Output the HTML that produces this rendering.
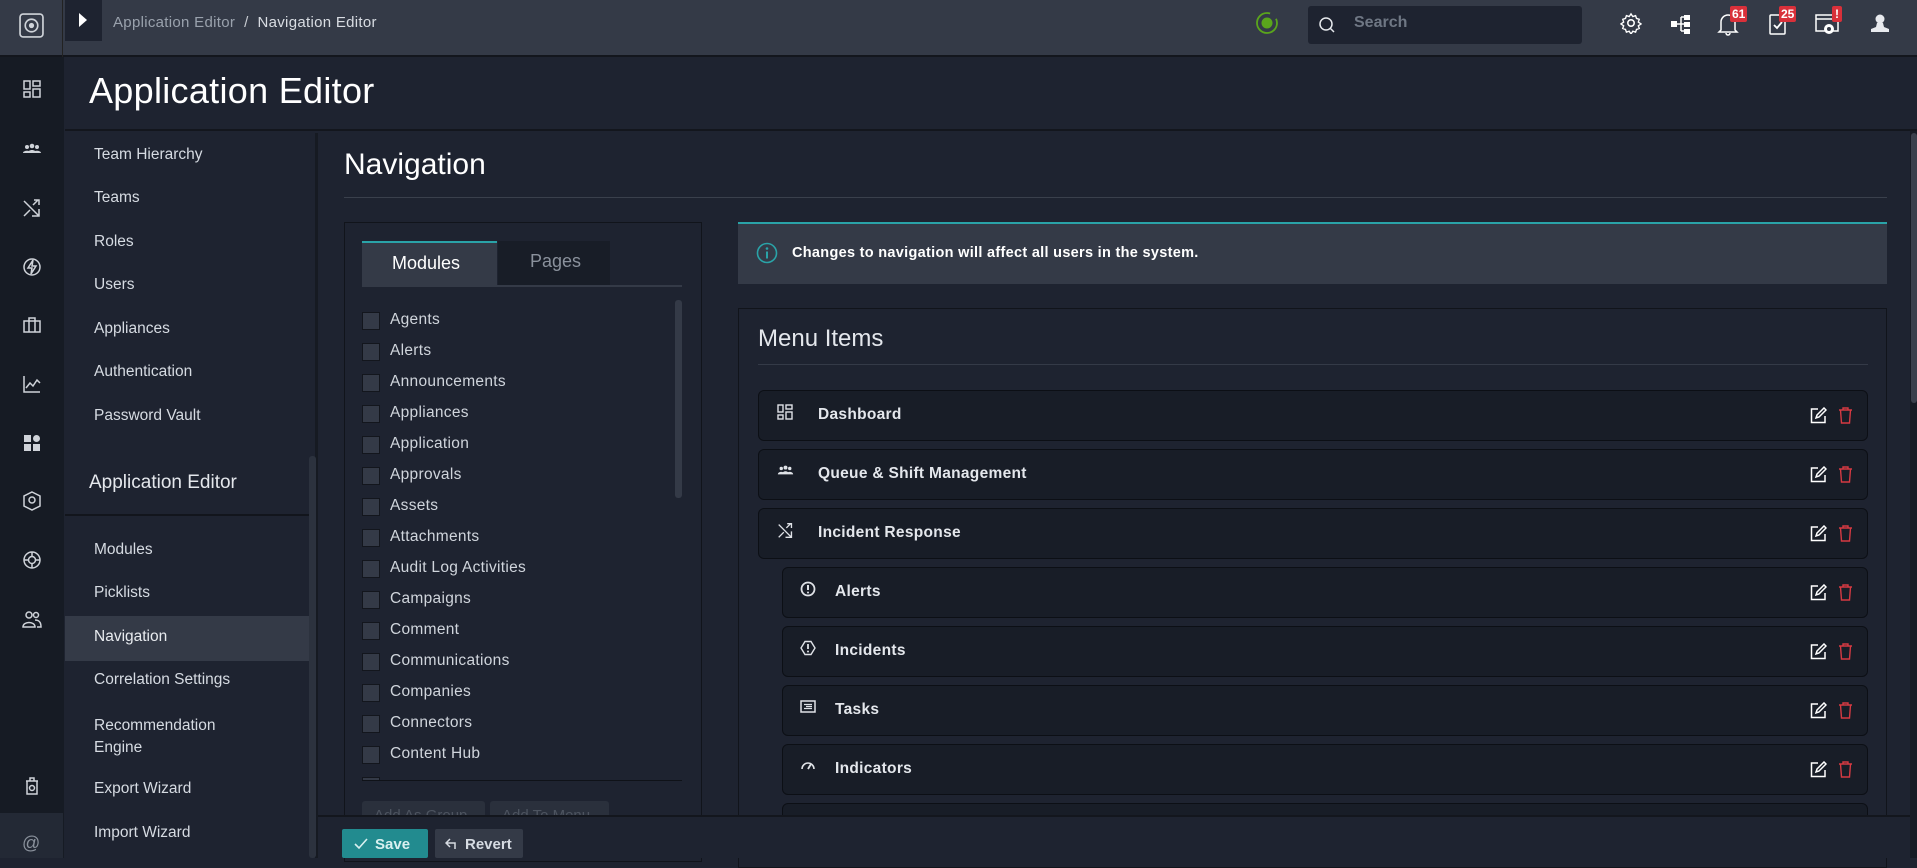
<!DOCTYPE html>
<html><head><meta charset="utf-8"><style>
*{box-sizing:border-box;margin:0;padding:0}
body{width:1917px;height:858px;overflow:hidden;background:#1e2330;font-family:"Liberation Sans",sans-serif;color:#dde1e7;position:relative}
.a{position:absolute}
.top{left:0;top:0;width:1917px;height:57px;background:#343a47;border-bottom:2px solid #13161d}
.rail{left:0;top:57px;width:64px;height:801px;background:#161b24}
.ri{position:absolute;left:22px;width:20px;height:20px}
.nav{font-size:15.5px;color:#d6dbe2;left:94px}
.ck{position:absolute;left:362px;width:18px;height:18px;background:#343a47;border:1px solid #13161d}
.cl{position:absolute;left:390px;font-size:15.5px;color:#d0d5dc;letter-spacing:.3px}
.row{position:absolute;height:51px;background:#181d27;border:1px solid #0c0f15;border-radius:6px;right:49px}
.row span{position:absolute;top:15px;font-size:15.5px;font-weight:bold;color:#e4e7ec;letter-spacing:.3px}
.row svg{position:absolute;top:15px}
.row svg.ed{left:auto;right:40px;top:16px}
.row svg.tr{left:auto;right:14px;top:16px}
</style></head><body>
<div class="a top"></div>
<div class="a" style="left:0;top:0;width:63px;height:57px;border-right:1px solid #222"></div>
<svg class="a" style="left:19px;top:13px" width="25" height="25" viewBox="0 0 24 24"><rect x="1" y="1" width="22" height="22" rx="3" fill="none" stroke="#cfd3d9" stroke-width="1.6"/><circle cx="12" cy="12" r="6" fill="none" stroke="#cfd3d9" stroke-width="1.6"/><circle cx="12" cy="12" r="2.5" fill="#cfd3d9"/></svg>
<div class="a" style="left:65px;top:0;width:37px;height:41px;background:#1e2330"></div>
<svg class="a" style="left:78px;top:12px" width="10" height="16"><path d="M1 1 L9 8 L1 15Z" fill="#fff"/></svg>
<div class="a" style="left:113px;top:14px;font-size:15px;color:#9aa2ad;letter-spacing:.3px">Application Editor <span style="color:#c8ccd2">&nbsp;/&nbsp;&nbsp;</span><span style="color:#d9dde3">Navigation Editor</span></div>
<svg class="a" style="left:1255px;top:11px" width="24" height="24" viewBox="0 0 24 24"><circle cx="12" cy="12" r="10" fill="none" stroke="#5aa51c" stroke-width="1.8" stroke-dasharray="50 8"/><circle cx="12" cy="12" r="5.5" fill="#5aa51c"/></svg>
<div class="a" style="left:1308px;top:6px;width:274px;height:38px;background:#1e2330;border-radius:3px"></div>
<svg class="a" style="left:1318px;top:16px" width="18" height="18" viewBox="0 0 18 18"><circle cx="8" cy="8" r="6" fill="none" stroke="#e5e8ec" stroke-width="1.5"/><path d="M12 12l4 4" stroke="#e5e8ec" stroke-width="1.5"/></svg>
<div class="a" style="left:1354px;top:14px;font-size:16px;color:#6f7784;font-weight:bold">Search</div>
<svg class="a" style="left:1620px;top:12px" width="22" height="22" viewBox="0 0 24 24"><circle cx="12" cy="12" r="3.5" fill="none" stroke="#fff" stroke-width="1.7"/><path d="M12 2l2 3 3-1 1 3 3 1-1 3 3 2-3 2 1 3-3 1-1 3-3-1-2 3-2-3-3 1-1-3-3-1 1-3-3-2 3-2-1-3 3-1 1-3 3 1z" fill="none" stroke="#fff" stroke-width="1.5"/></svg>
<svg class="a" style="left:1670px;top:13px" width="22" height="22" viewBox="0 0 22 22"><rect x="1" y="8" width="6" height="6" fill="#fff"/><rect x="14" y="2" width="6" height="5" fill="#fff"/><rect x="14" y="9" width="6" height="5" fill="#fff"/><rect x="14" y="16" width="6" height="5" fill="#fff"/><path d="M7 11h4M11 4v14M11 4h3M11 11h3M11 18h3" stroke="#fff" stroke-width="1.5"/></svg>
<svg class="a" style="left:1717px;top:12px" width="22" height="24" viewBox="0 0 22 24"><path d="M4 18V10a7 7 0 0114 0v8l2 2H2z M9 21a2 2 0 004 0" fill="none" stroke="#fff" stroke-width="1.5"/></svg>
<div class="a" style="left:1730px;top:6px;background:#d9303a;color:#fff;font-size:12px;font-weight:bold;padding:1px 2px;border-radius:2px">61</div>
<svg class="a" style="left:1768px;top:12px" width="20" height="24" viewBox="0 0 20 24"><rect x="2" y="3" width="15" height="19" rx="1" fill="none" stroke="#fff" stroke-width="1.5"/><path d="M6 13l3 3 5-6" fill="none" stroke="#fff" stroke-width="1.8"/></svg>
<div class="a" style="left:1779px;top:6px;background:#d9303a;color:#fff;font-size:12px;font-weight:bold;padding:1px 2px;border-radius:2px">25</div>
<svg class="a" style="left:1815px;top:12px" width="26" height="24" viewBox="0 0 26 24"><rect x="1" y="3" width="22" height="16" fill="none" stroke="#fff" stroke-width="1.5"/><path d="M1 7h22" stroke="#fff" stroke-width="1.5"/><circle cx="14" cy="17" r="5" fill="#fff"/><circle cx="14" cy="17" r="2" fill="#343a47"/></svg>
<div class="a" style="left:1832px;top:6px;background:#d9303a;color:#fff;font-size:12px;font-weight:bold;padding:1px 3px;border-radius:2px">!</div>
<svg class="a" style="left:1870px;top:13px" width="20" height="20" viewBox="0 0 20 20"><circle cx="10" cy="6" r="4.5" fill="#e8eaee"/><path d="M7 10h6l1 4 5 2v3H1v-3l5-2z" fill="#e8eaee"/></svg>

<div class="a rail"></div>
<svg class="ri" style="top:79px" viewBox="0 0 20 20" fill="none" stroke="#cfd3d9" stroke-width="1.5"><rect x="2" y="2" width="6" height="8"/><rect x="11" y="2" width="7" height="5"/><rect x="2" y="13" width="6" height="5"/><rect x="11" y="10" width="7" height="8"/></svg>
<svg class="ri" style="top:139px" viewBox="0 0 20 20" fill="#cfd3d9"><circle cx="5" cy="8" r="2"/><circle cx="10" cy="7" r="2.3"/><circle cx="15" cy="8" r="2"/><path d="M1 14c0-3 8-3 8 0zM6 14c0-4 8-4 8 0zM11 14c0-3 8-3 8 0z"/></svg>
<svg class="ri" style="top:198px" viewBox="0 0 20 20" fill="none" stroke="#cfd3d9" stroke-width="1.5"><path d="M2 3l15 15M17 11v7h-7M2 18L8 12M11 7l5-5M12 2h5v5"/></svg>
<svg class="ri" style="top:257px" viewBox="0 0 20 20" fill="none" stroke="#cfd3d9" stroke-width="1.5"><circle cx="10" cy="10" r="8"/><path d="M11 3L6 11h4l-1 6 5-8h-4z"/></svg>
<svg class="ri" style="top:315px" viewBox="0 0 20 20" fill="none" stroke="#cfd3d9" stroke-width="1.5"><rect x="2" y="6" width="16" height="11"/><path d="M7 6V3h6v3M7 6v11M13 6v11"/></svg>
<svg class="ri" style="top:374px" viewBox="0 0 20 20" fill="none" stroke="#cfd3d9" stroke-width="1.5"><path d="M2 2v16h16M4 14l4-5 3 3 4-6 3 3"/></svg>
<svg class="ri" style="top:433px" viewBox="0 0 20 20" fill="#cfd3d9"><rect x="2" y="2" width="7" height="7"/><circle cx="14.5" cy="5.5" r="3.5"/><rect x="2" y="11" width="7" height="7"/><rect x="11" y="11" width="7" height="7"/></svg>
<svg class="ri" style="top:491px" viewBox="0 0 20 20" fill="none" stroke="#cfd3d9" stroke-width="1.5"><path d="M10 1l8 4v10l-8 4-8-4V5z"/><circle cx="10" cy="9" r="3"/></svg>
<svg class="ri" style="top:550px" viewBox="0 0 20 20" fill="none" stroke="#cfd3d9" stroke-width="1.5"><circle cx="10" cy="10" r="8"/><circle cx="10" cy="10" r="3.5"/><path d="M10 2v4M10 14v4M2 10h4M14 10h4"/></svg>
<svg class="ri" style="top:609px" viewBox="0 0 20 20" fill="none" stroke="#cfd3d9" stroke-width="1.5"><circle cx="7" cy="6" r="3"/><circle cx="14" cy="6" r="2.5"/><path d="M1 18c0-6 12-6 12 0zM13 11c4 0 6 2 6 7h-4"/></svg>
<svg class="ri" style="top:776px" viewBox="0 0 20 20" fill="none" stroke="#cfd3d9" stroke-width="1.5"><path d="M4 5h12M8 5V2h4v3M5 5v13h10V5"/><circle cx="10" cy="12" r="2.5"/></svg>
<div class="a" style="left:0;top:813px;width:63px;height:45px;background:#232935"></div>
<div class="a" style="left:22px;top:833px;font-size:18px;color:#8a919c">@</div>

<div class="a" style="left:65px;top:59px;width:1852px;height:72px;background:#1e2330;border-bottom:2px solid #13161d"></div>
<div class="a" style="left:89px;top:70px;font-size:36px;color:#fff;letter-spacing:.3px">Application Editor</div>

<div class="a" style="left:65px;top:133px;width:253px;height:725px;background:#1e2330;border-right:3px solid #161a22"></div>
<div class="a nav" style="top:146px">Team Hierarchy</div>
<div class="a nav" style="top:189px">Teams</div>
<div class="a nav" style="top:233px">Roles</div>
<div class="a nav" style="top:276px">Users</div>
<div class="a nav" style="top:320px">Appliances</div>
<div class="a nav" style="top:363px">Authentication</div>
<div class="a nav" style="top:407px">Password Vault</div>
<div class="a" style="left:89px;top:472px;font-size:19px;color:#e4e7ec">Application Editor</div>
<div class="a" style="left:65px;top:514px;width:244px;height:2px;background:#12151c"></div>
<div class="a nav" style="top:541px">Modules</div>
<div class="a nav" style="top:584px">Picklists</div>
<div class="a" style="left:65px;top:616px;width:244px;height:45px;background:#343a47"></div>
<div class="a nav" style="top:628px;color:#e8ebef">Navigation</div>
<div class="a nav" style="top:671px">Correlation Settings</div>
<div class="a nav" style="top:715px;line-height:22px">Recommendation<br>Engine</div>
<div class="a nav" style="top:780px">Export Wizard</div>
<div class="a nav" style="top:824px">Import Wizard</div>
<div class="a" style="left:309px;top:456px;width:7px;height:402px;background:#2c323e;border-radius:3px"></div>

<div class="a" style="left:344px;top:148px;font-size:30px;color:#fff">Navigation</div>
<div class="a" style="left:344px;top:197px;width:1543px;height:1px;background:#3a404c"></div>
<div class="a" style="left:1910px;top:131px;width:7px;height:727px;background:#161b24"></div>
<div class="a" style="left:1911px;top:133px;width:6px;height:270px;background:#3a404c;border-radius:3px"></div>

<div class="a" style="left:344px;top:222px;width:358px;height:640px;border:1px solid #11141b"></div>
<div class="a" style="left:362px;top:241px;width:320px;height:46px;border-bottom:2px solid #343a47"></div>
<div class="a" style="left:362px;top:241px;width:135px;height:46px;background:#343a47;border-top:2px solid #2aa3a8"></div>
<div class="a" style="left:392px;top:253px;font-size:18px;color:#fff">Modules</div>
<div class="a" style="left:498px;top:241px;width:112px;height:44px;background:#181d27"></div>
<div class="a" style="left:530px;top:251px;font-size:18px;color:#8a919c">Pages</div>
<div class="a" style="left:675px;top:300px;width:7px;height:198px;background:#343a47;border-radius:3px"></div>
<div class="ck" style="top:312px"></div><div class="cl" style="top:311px">Agents</div>
<div class="ck" style="top:343px"></div><div class="cl" style="top:342px">Alerts</div>
<div class="ck" style="top:374px"></div><div class="cl" style="top:373px">Announcements</div>
<div class="ck" style="top:405px"></div><div class="cl" style="top:404px">Appliances</div>
<div class="ck" style="top:436px"></div><div class="cl" style="top:435px">Application</div>
<div class="ck" style="top:467px"></div><div class="cl" style="top:466px">Approvals</div>
<div class="ck" style="top:498px"></div><div class="cl" style="top:497px">Assets</div>
<div class="ck" style="top:529px"></div><div class="cl" style="top:528px">Attachments</div>
<div class="ck" style="top:560px"></div><div class="cl" style="top:559px">Audit Log Activities</div>
<div class="ck" style="top:591px"></div><div class="cl" style="top:590px">Campaigns</div>
<div class="ck" style="top:622px"></div><div class="cl" style="top:621px">Comment</div>
<div class="ck" style="top:653px"></div><div class="cl" style="top:652px">Communications</div>
<div class="ck" style="top:684px"></div><div class="cl" style="top:683px">Companies</div>
<div class="ck" style="top:715px"></div><div class="cl" style="top:714px">Connectors</div>
<div class="ck" style="top:746px"></div><div class="cl" style="top:745px">Content Hub</div>
<div class="ck" style="top:777px;height:4px"></div>
<div class="a" style="left:362px;top:780px;width:320px;height:1px;background:#0f1218"></div>
<div class="a" style="left:362px;top:801px;width:123px;height:20px;background:#2a303c;border-radius:3px;overflow:hidden;font-size:15px;color:#4d5460;padding:6px 0 0 12px;white-space:nowrap">Add As Group</div>
<div class="a" style="left:490px;top:801px;width:119px;height:20px;background:#2a303c;border-radius:3px;overflow:hidden;font-size:15px;color:#4d5460;padding:6px 0 0 12px;white-space:nowrap">Add To Menu</div>

<div class="a" style="left:738px;top:222px;width:1149px;height:62px;background:#343a47;border-top:2px solid #2aa3a8"></div>
<svg class="a" style="left:756px;top:242px" width="22" height="22" viewBox="0 0 22 22"><circle cx="11" cy="11" r="9.5" fill="none" stroke="#2aa3a8" stroke-width="1.6"/><circle cx="11" cy="6.5" r="1.3" fill="#2aa3a8"/><path d="M11 9.5v7" stroke="#2aa3a8" stroke-width="2"/></svg>
<div class="a" style="left:792px;top:245px;font-size:14.5px;color:#fff;font-weight:bold;letter-spacing:.3px">Changes to navigation will affect all users in the system.</div>

<div class="a" style="left:738px;top:308px;width:1149px;height:560px;border:1px solid #11141b"></div>
<div class="a" style="left:758px;top:325px;font-size:24px;color:#e4e7ec">Menu Items</div>
<div class="a" style="left:758px;top:364px;width:1110px;height:1px;background:#343a47"></div>

<div class="row" style="left:758px;top:390px"><svg style="left:18px;top:13px" width="17" height="17" viewBox="0 0 17 17" fill="none" stroke="#dfe2e7" stroke-width="1.4"><rect x="1" y="1" width="5" height="7"/><rect x="9" y="1" width="6" height="4"/><rect x="1" y="11" width="5" height="4"/><rect x="9" y="8" width="6" height="7"/></svg><span style="left:59px">Dashboard</span><svg class="ed" width="17" height="17" viewBox="0 0 17 17" fill="none" stroke="#fff" stroke-width="1.5"><path d="M8 2H1.5v13.5H15V9"/><path d="M6 11l1-3 7-7 2 2-7 7z"/></svg><svg class="tr" width="15" height="17" viewBox="0 0 15 17" fill="none" stroke="#d63a42" stroke-width="1.4"><path d="M1 3h13M5 3V1h5v2M2.5 3l1 13h8l1-13"/></svg></div>
<div class="row" style="left:758px;top:449px"><svg style="left:18px;top:15px" width="17" height="12" viewBox="0 0 20 14" fill="#dfe2e7"><circle cx="5" cy="4" r="2"/><circle cx="10" cy="3" r="2.3"/><circle cx="15" cy="4" r="2"/><path d="M1 11c0-4 8-4 8 0zM6 11c0-5 8-5 8 0zM11 11c0-4 8-4 8 0z"/></svg><span style="left:59px">Queue &amp; Shift Management</span><svg class="ed" width="17" height="17" viewBox="0 0 17 17" fill="none" stroke="#fff" stroke-width="1.5"><path d="M8 2H1.5v13.5H15V9"/><path d="M6 11l1-3 7-7 2 2-7 7z"/></svg><svg class="tr" width="15" height="17" viewBox="0 0 15 17" fill="none" stroke="#d63a42" stroke-width="1.4"><path d="M1 3h13M5 3V1h5v2M2.5 3l1 13h8l1-13"/></svg></div>
<div class="row" style="left:758px;top:508px"><svg style="left:18px;top:13px" width="17" height="17" viewBox="0 0 20 20" fill="none" stroke="#dfe2e7" stroke-width="1.6"><path d="M2 3l15 15M17 11v7h-7M2 18L8 12M11 7l5-5M12 2h5v5"/></svg><span style="left:59px">Incident Response</span><svg class="ed" width="17" height="17" viewBox="0 0 17 17" fill="none" stroke="#fff" stroke-width="1.5"><path d="M8 2H1.5v13.5H15V9"/><path d="M6 11l1-3 7-7 2 2-7 7z"/></svg><svg class="tr" width="15" height="17" viewBox="0 0 15 17" fill="none" stroke="#d63a42" stroke-width="1.4"><path d="M1 3h13M5 3V1h5v2M2.5 3l1 13h8l1-13"/></svg></div>
<div class="row" style="left:782px;top:567px"><svg style="left:17px;top:13px" width="16" height="16" viewBox="0 0 16 16"><circle cx="8" cy="8" r="6.5" fill="none" stroke="#dfe2e7" stroke-width="1.8"/><path d="M8 4v5" stroke="#dfe2e7" stroke-width="2"/><circle cx="8" cy="11.5" r="1" fill="#dfe2e7"/></svg><span style="left:52px">Alerts</span><svg class="ed" width="17" height="17" viewBox="0 0 17 17" fill="none" stroke="#fff" stroke-width="1.5"><path d="M8 2H1.5v13.5H15V9"/><path d="M6 11l1-3 7-7 2 2-7 7z"/></svg><svg class="tr" width="15" height="17" viewBox="0 0 15 17" fill="none" stroke="#d63a42" stroke-width="1.4"><path d="M1 3h13M5 3V1h5v2M2.5 3l1 13h8l1-13"/></svg></div>
<div class="row" style="left:782px;top:626px"><svg style="left:17px;top:13px" width="16" height="16" viewBox="0 0 16 16"><path d="M5 1.5h6l4 6.5-4 6.5H5L1 8z" fill="none" stroke="#dfe2e7" stroke-width="1.4"/><path d="M8 4v5" stroke="#dfe2e7" stroke-width="1.8"/><circle cx="8" cy="11.5" r="1" fill="#dfe2e7"/></svg><span style="left:52px">Incidents</span><svg class="ed" width="17" height="17" viewBox="0 0 17 17" fill="none" stroke="#fff" stroke-width="1.5"><path d="M8 2H1.5v13.5H15V9"/><path d="M6 11l1-3 7-7 2 2-7 7z"/></svg><svg class="tr" width="15" height="17" viewBox="0 0 15 17" fill="none" stroke="#d63a42" stroke-width="1.4"><path d="M1 3h13M5 3V1h5v2M2.5 3l1 13h8l1-13"/></svg></div>
<div class="row" style="left:782px;top:685px"><svg style="left:17px;top:14px" width="16" height="13" viewBox="0 0 16 13"><rect x="1" y="1" width="14" height="11" fill="none" stroke="#dfe2e7" stroke-width="1.5"/><path d="M4 4.5h8M6 6.5h6M4 8.5h8" stroke="#dfe2e7" stroke-width="1.2"/></svg><span style="left:52px">Tasks</span><svg class="ed" width="17" height="17" viewBox="0 0 17 17" fill="none" stroke="#fff" stroke-width="1.5"><path d="M8 2H1.5v13.5H15V9"/><path d="M6 11l1-3 7-7 2 2-7 7z"/></svg><svg class="tr" width="15" height="17" viewBox="0 0 15 17" fill="none" stroke="#d63a42" stroke-width="1.4"><path d="M1 3h13M5 3V1h5v2M2.5 3l1 13h8l1-13"/></svg></div>
<div class="row" style="left:782px;top:744px"><svg style="left:17px;top:14px" width="16" height="12" viewBox="0 0 16 12"><path d="M2 10a6 6 0 0112 0" fill="none" stroke="#dfe2e7" stroke-width="1.6"/><path d="M8 10l3-5" stroke="#dfe2e7" stroke-width="1.8"/></svg><span style="left:52px">Indicators</span><svg class="ed" width="17" height="17" viewBox="0 0 17 17" fill="none" stroke="#fff" stroke-width="1.5"><path d="M8 2H1.5v13.5H15V9"/><path d="M6 11l1-3 7-7 2 2-7 7z"/></svg><svg class="tr" width="15" height="17" viewBox="0 0 15 17" fill="none" stroke="#d63a42" stroke-width="1.4"><path d="M1 3h13M5 3V1h5v2M2.5 3l1 13h8l1-13"/></svg></div>
<div class="row" style="left:782px;top:803px;height:20px"></div>

<div class="a" style="left:318px;top:815px;width:1592px;height:43px;background:#1e2330;border-top:2px solid #13161d"></div>
<div class="a" style="left:342px;top:829px;width:86px;height:29px;background:#228b8f;border-radius:2px"></div>
<svg class="a" style="left:354px;top:838px" width="14" height="12"><path d="M1 6l4 4 8-9" fill="none" stroke="#d9f0f0" stroke-width="1.6"/></svg>
<div class="a" style="left:375px;top:836px;font-size:15px;color:#d9f0f0;font-weight:bold">Save</div>
<div class="a" style="left:435px;top:829px;width:88px;height:29px;background:#343a47;border-radius:2px"></div>
<svg class="a" style="left:445px;top:838px" width="14" height="12"><path d="M5 1L1 5l4 4M1 5h9v6" fill="none" stroke="#d6dbe2" stroke-width="1.5"/></svg>
<div class="a" style="left:465px;top:836px;font-size:15px;color:#d6dbe2;font-weight:bold">Revert</div>
</body></html>
